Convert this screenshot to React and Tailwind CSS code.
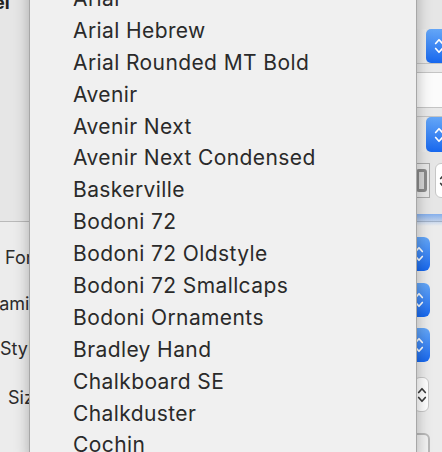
import React from "react";

const fonts = [
  "Arial",
  "Arial Hebrew",
  "Arial Rounded MT Bold",
  "Avenir",
  "Avenir Next",
  "Avenir Next Condensed",
  "Baskerville",
  "Bodoni 72",
  "Bodoni 72 Oldstyle",
  "Bodoni 72 Smallcaps",
  "Bodoni Ornaments",
  "Bradley Hand",
  "Chalkboard SE",
  "Chalkduster",
  "Cochin",
];

function UpDown({ color = "white", className = "" }) {
  return (
    <svg viewBox="0 0 12 22" className={className} fill="none" stroke={color} strokeWidth="2" strokeLinecap="round" strokeLinejoin="round">
      <path d="M2 8 L6 3.5 L10 8" />
      <path d="M2 14 L6 18.5 L10 14" />
    </svg>
  );
}

function BluePopup() {
  return (
    <div className="flex h-[34px] w-[370px] rounded-[6px] bg-white">
      <div className="flex-1" />
      <div className="flex w-[22px] items-center justify-center rounded-r-[6px] bg-gradient-to-b from-[#64a6f7] to-[#1667ee]">
        <UpDown className="h-[20px] w-[10px]" />
      </div>
    </div>
  );
}

function Label({ text, className }) {
  return (
    <div className={"w-[60px] shrink-0 pt-[6px] text-[18px] whitespace-nowrap " + className}>{text}</div>
  );
}

export default function App() {
  return (
    <div className="relative h-[452px] w-[442px] overflow-hidden bg-[#ececec] font-['Inter',sans-serif] text-[#2b2b2b]">
      {/* window behind the menu */}
      <div className="flex h-full flex-col">
        {/* upper part */}
        <div className="flex h-[222px] shrink-0 border-b border-[#b9b9b9] bg-[#e6e6e6]">
          <div className="w-[60px] shrink-0 leading-none">
            <div className="mt-[-6px] ml-[-38px] text-[18px] font-bold text-[#222]">Label</div>
          </div>
          <div className="ml-[356px] flex flex-1 flex-col">
            <div className="h-[29px]" />
            <div className="flex h-[34px]">
              <div className="w-[10px] bg-gradient-to-r from-[#e2e2e2] to-[#ececec]" />
              <div className="flex flex-1 items-center rounded-l-[5px] bg-gradient-to-b from-[#64a6f7] to-[#1667ee] pl-[8px]">
                <UpDown className="h-[20px] w-[10px]" />
              </div>
            </div>
            <div className="h-[10px] border-y border-[#c4c4c4] bg-[#e9e9e9]" />
            <div className="h-[34px] bg-[#fbfbfb]" />
            <div className="h-[10px] border-y border-[#c4c4c4] bg-[#e9e9e9]" />
            <div className="flex h-[35px]">
              <div className="w-[10px] bg-gradient-to-r from-[#e2e2e2] to-[#ececec]" />
              <div className="flex flex-1 items-center rounded-l-[5px] bg-gradient-to-b from-[#64a6f7] to-[#1667ee] pl-[8px]">
                <UpDown className="h-[20px] w-[10px]" />
              </div>
            </div>
            <div className="h-[11px]" />
            <div className="ml-[-4px] flex h-[35px] items-center gap-[5px]">
              <div className="flex h-[35px] w-[18px] items-center justify-center border border-[#a9a9a9] bg-[#e8e8e8]">
                <div className="h-[23px] w-[11px] rounded-[3px] border-[3px] border-[#8a8a8a] bg-[#d6d6d6]" />
              </div>
              <div className="flex h-[35px] w-[18px] items-center justify-center rounded-[6px] border border-[#c6c6c6] bg-white">
                <UpDown color="#3a3a3a" className="h-[20px] w-[10px]" />
              </div>
            </div>
          </div>
        </div>
        {/* lower part */}
        <div className="relative flex flex-1">
          <div className="flex flex-col pt-[15px]">
            <div className="flex h-[34px] items-center">
              <Label text="Font:" className="pl-[5px]" />
              <BluePopup />
            </div>
            <div className="mt-[12px] flex h-[34px] items-center">
              <Label text="Family:" className="-ml-[11px] mr-[11px]" />
              <BluePopup />
            </div>
            <div className="mt-[11px] flex h-[34px] items-center">
              <Label text="Style:" />
              <BluePopup />
            </div>
            <div className="mt-[15px] flex h-[35px] items-center">
              <Label text="Size:" className="pl-[8px]" />
              <div className="ml-[354px] flex h-[35px] w-[15px] items-center justify-center rounded-[6px] border border-[#c9c9c9] bg-white">
                <UpDown color="#3a3a3a" className="h-[20px] w-[10px]" />
              </div>
            </div>
            <div className="ml-[406px] mt-[21px] h-[30px] w-[24px] rounded-[6px] border-2 border-[#b9b9b9] bg-[#f2f2f2]" />
          </div>
          <div className="pointer-events-none absolute left-[400px] right-0 top-[-8px] h-[12px] bg-gradient-to-b from-[#5b97ee] to-transparent opacity-70" />
        </div>
      </div>

      {/* the font menu overlay */}
      <div className="absolute left-[29px] top-[-21px] w-[388px] border-x border-[#a7a7a7] bg-[#f0f0f0] pt-[4px] shadow-[0_0_14px_rgba(0,0,0,0.28)]">
        {fonts.map((f) => (
          <div key={f} className="h-[31.9px] pl-[43px] text-[21px] leading-[32px] tracking-[0.4px] whitespace-nowrap text-[#2a2a2a]">
            {f}
          </div>
        ))}
      </div>
    </div>
  );
}
